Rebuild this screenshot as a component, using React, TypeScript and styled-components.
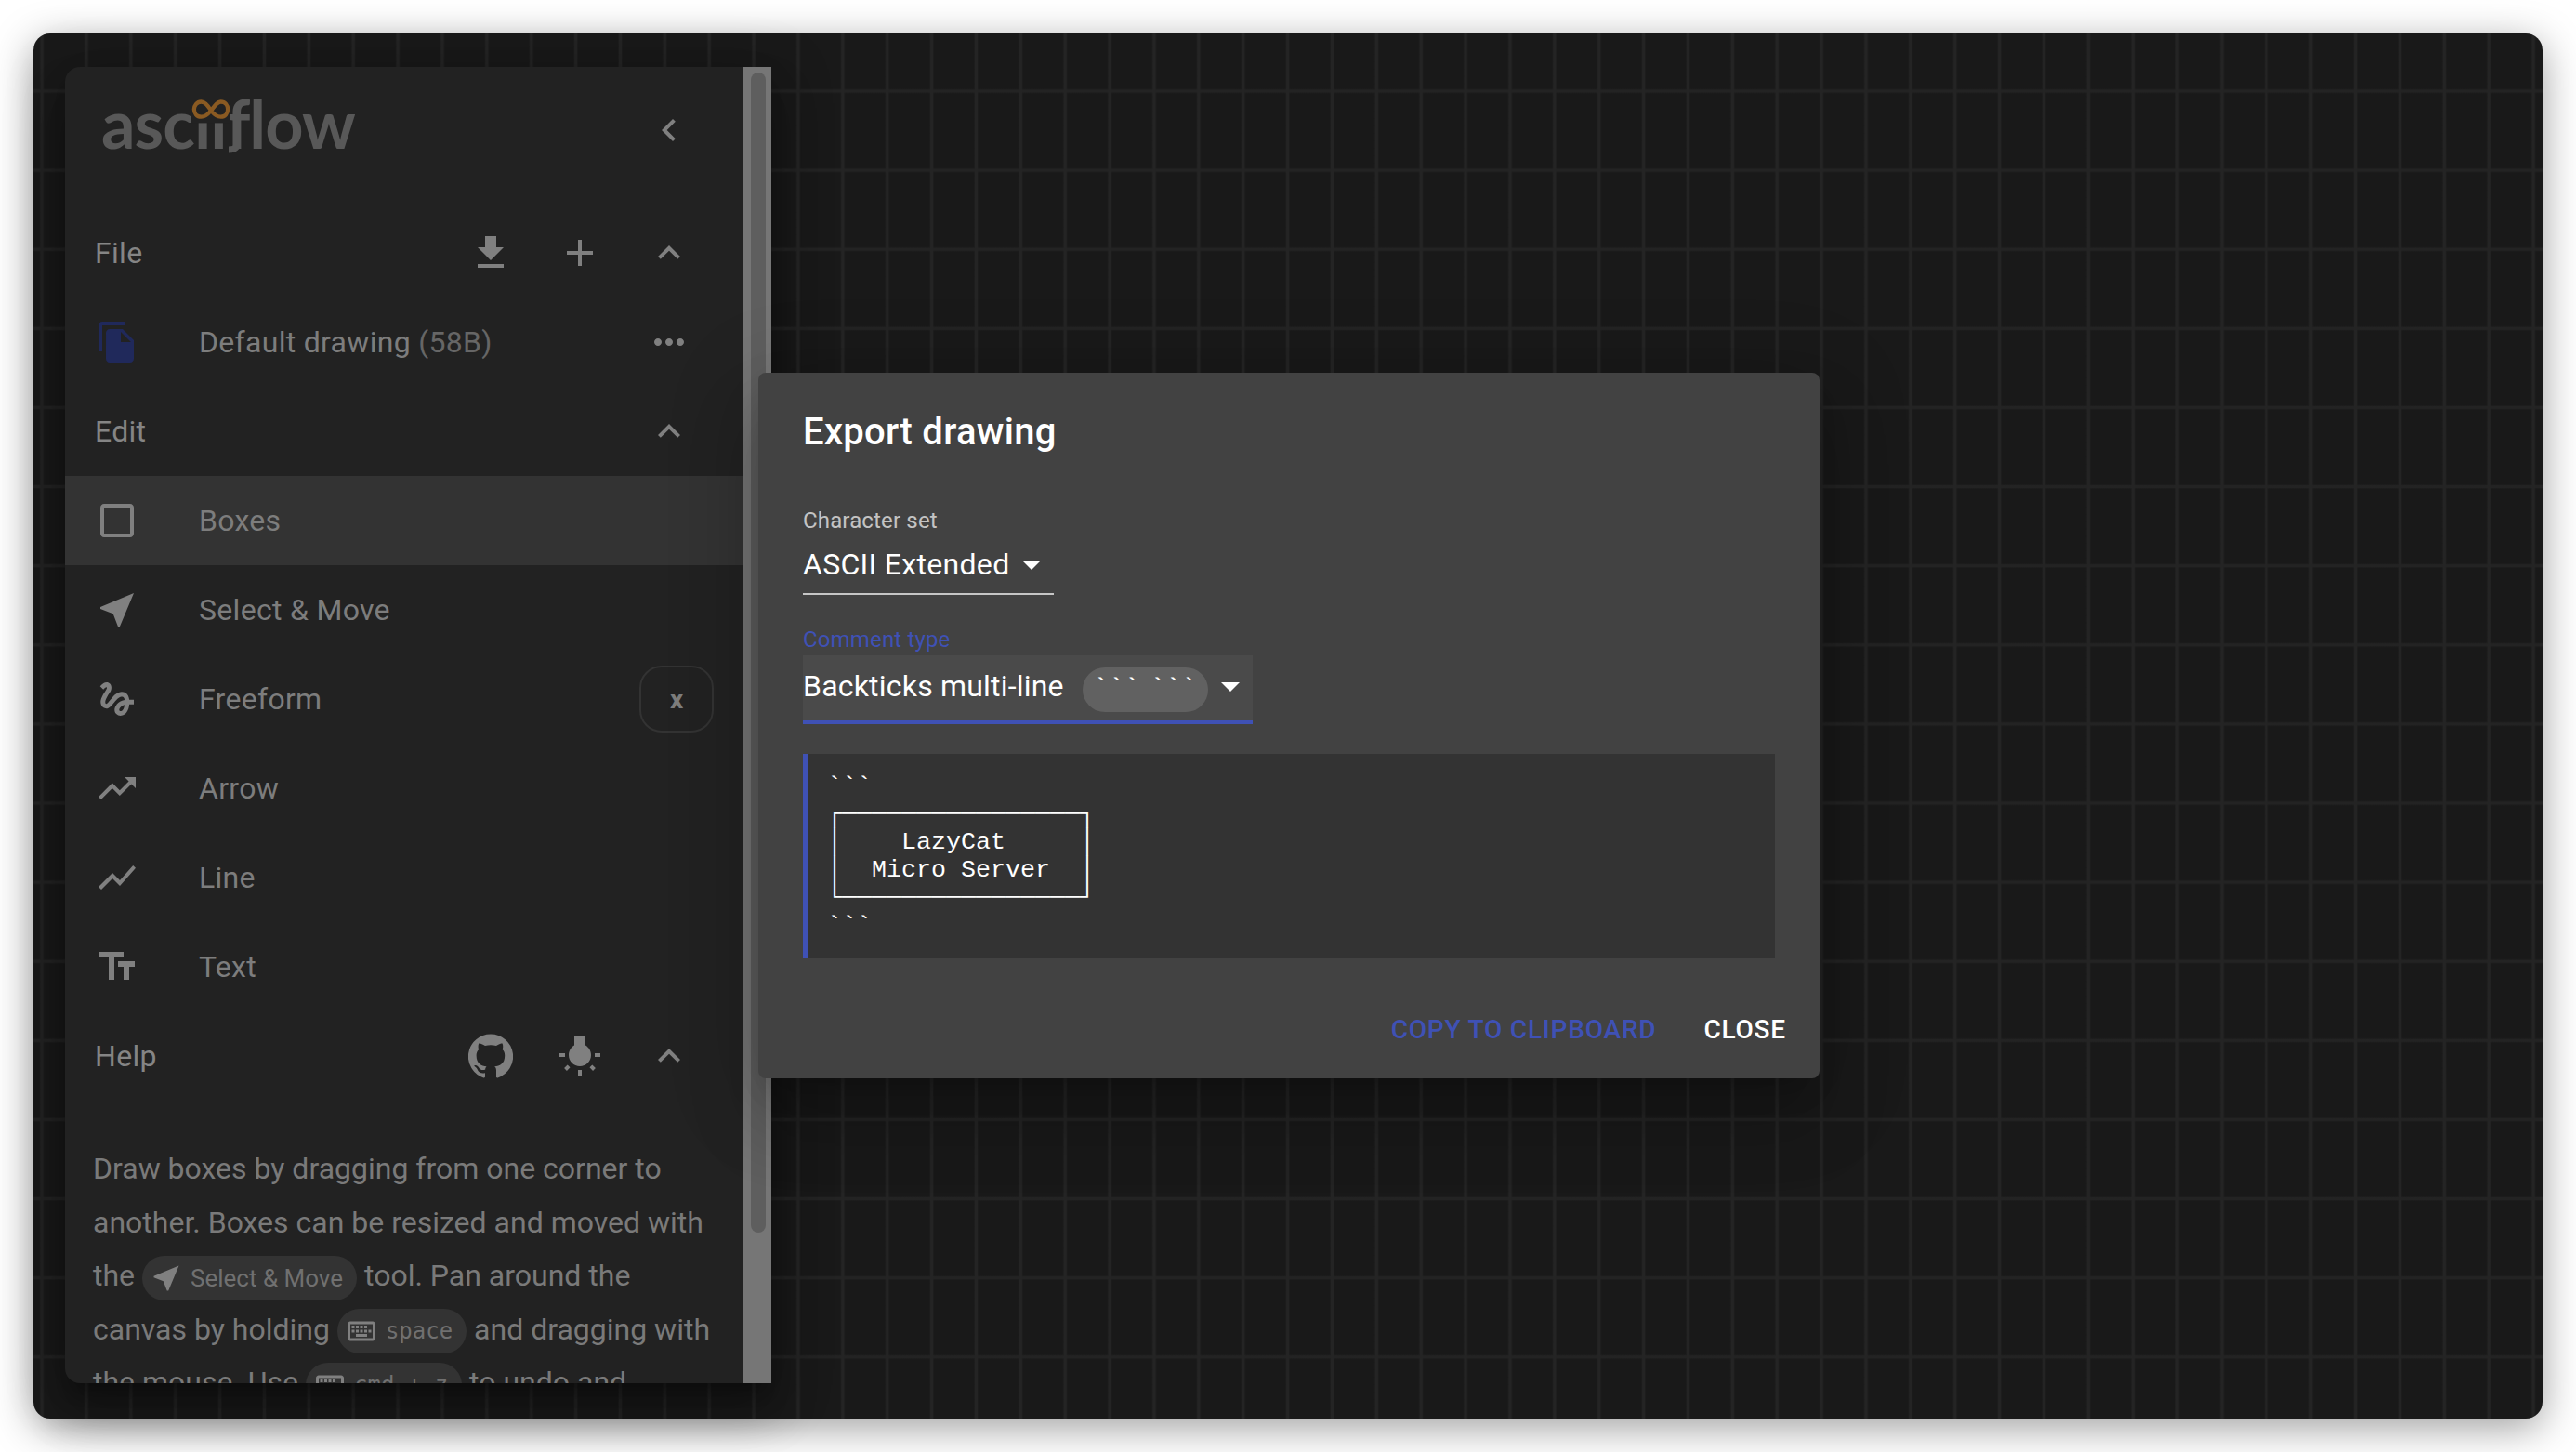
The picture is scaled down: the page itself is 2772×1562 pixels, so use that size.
import styled, { createGlobalStyle } from 'styled-components';

const GlobalStyle = createGlobalStyle`
    html, body {
        margin: 0;
        background: #ffffff;
    }
    * {
        box-sizing: border-box;
    }
`

const ICONS: Record<string, string> = {
    download: "M19 9h-4V3H9v6H5l7 7 7-7zM5 18v2h14v-2H5z",
    add: "M19 13h-6v6h-2v-6H5v-2h6V5h2v6h6v2z",
    less: "M12 8l-6 6 1.41 1.41L12 10.83l4.59 4.58L18 14z",
    back: "M15.41 7.41L14 6l-6 6 6 6 1.41-1.41L10.83 12z",
    file: "M16 1H4c-1.1 0-2 .9-2 2v14h2V3h12V1zm-1 4l6 6v10c0 1.1-.9 2-2 2H7.99C6.89 23 6 22.1 6 21l.01-14c0-1.1.89-2 1.99-2h7zm-1 7h5.5L14 6.5V12z",
    more: "M6 10c-1.1 0-2 .9-2 2s.9 2 2 2 2-.9 2-2-.9-2-2-2zm12 0c-1.1 0-2 .9-2 2s.9 2 2 2 2-.9 2-2-.9-2-2-2zm-6 0c-1.1 0-2 .9-2 2s.9 2 2 2 2-.9 2-2-.9-2-2-2z",
    box: "M19 5v14H5V5h14m0-2H5c-1.1 0-2 .9-2 2v14c0 1.1.9 2 2 2h14c1.1 0 2-.9 2-2V5c0-1.1-.9-2-2-2z",
    near: "M21 3L3 10.53v.98l6.84 2.65L12.48 21h.98L21 3z",
    gesture: "M4.59 6.89c.7-.71 1.4-1.35 1.71-1.22.5.2 0 1.03-.3 1.52-.25.42-2.86 3.89-2.86 6.31 0 1.28.48 2.34 1.34 2.98.75.56 1.74.73 2.64.46 1.07-.31 1.95-1.4 3.06-2.77 1.21-1.49 2.83-3.44 4.08-3.44 1.63 0 1.65 1.01 1.76 1.79-3.78.64-5.38 3.67-5.38 5.37 0 1.7 1.44 3.09 3.21 3.09 1.63 0 4.29-1.33 4.69-6.1H21v-2.5h-2.47c-.15-1.65-1.09-4.2-4.03-4.2-2.25 0-4.18 1.91-4.94 2.84-.58.73-2.06 2.48-2.29 2.72-.25.3-.68.84-1.11.84-.45 0-.72-.83-.36-1.92.35-1.09 1.4-2.86 1.85-3.52.78-1.14 1.3-1.92 1.3-3.28C8.95 3.69 7.31 3 6.44 3 5.12 3 3.97 4 3.72 4.25c-.36.36-.66.66-.88.93l1.75 1.71zm9.29 11.66c-.31 0-.74-.26-.74-.72 0-.6.73-2.2 2.87-2.76-.3 2.69-1.43 3.48-2.13 3.48z",
    trending: "M16 6l2.29 2.29-4.88 4.88-4-4L2 16.59 3.41 18l6-6 4 4 6.3-6.29L22 12V6z",
    chart: "M3.5 18.49l6-6.01 4 4L22 6.92l-1.41-1.41-7.09 7.97-4-4L2 16.99z",
    text: "M2.5 4v3h5v12h3V7h5V4h-13zm19 5h-9v3h3v7h3v-7h3V9z",
    github: "M12 .3a12 12 0 0 0-3.8 23.4c.6.1.8-.3.8-.6v-2c-3.3.7-4-1.6-4-1.6-.6-1.4-1.4-1.8-1.4-1.8-1-.7.1-.7.1-.7 1.2 0 1.9 1.2 1.9 1.2 1 1.8 2.8 1.3 3.5 1 0-.8.4-1.3.7-1.6-2.7-.3-5.5-1.3-5.5-6 0-1.2.5-2.3 1.3-3.1-.2-.4-.6-1.6 0-3.2 0 0 1-.3 3.4 1.2a11.5 11.5 0 0 1 6 0c2.3-1.5 3.3-1.2 3.3-1.2.6 1.6.2 2.8 0 3.2.9.8 1.3 1.9 1.3 3.2 0 4.6-2.8 5.6-5.5 5.9.5.4.9 1 .9 2.2v3.3c0 .3.1.7.8.6A12 12 0 0 0 12 .3",
    bulb: "M3.55 18.54l1.41 1.41 1.79-1.8-1.41-1.41-1.79 1.8zM11 22.45h2V19.5h-2v2.95zM4 10.5H1v2h3v-2zm11-4.19V1.5H9v4.81C7.21 7.35 6 9.28 6 11.5c0 3.31 2.69 6 6 6s6-2.69 6-6c0-2.22-1.21-4.15-3-5.19zm5 4.19v2h3v-2h-3zm-2.76 7.66l1.79 1.8 1.41-1.41-1.8-1.79-1.4 1.4z",
    keyboard: "M20 7v10H4V7h16m0-2H4c-1.1 0-1.99.9-1.99 2L2 17c0 1.1.9 2 2 2h16c1.1 0 2-.9 2-2V7c0-1.1-.9-2-2-2zm-9 3h2v2h-2zm0 3h2v2h-2zM8 8h2v2H8zm0 3h2v2H8zm-3 0h2v2H5zm0-3h2v2H5zm3 6h8v2H8zm6-3h2v2h-2zm0-3h2v2h-2zm3 3h2v2h-2zm0-3h-2V8h2z",
    drop: "M7 10l5 5 5-5z",
};

const Icon = ({ name, size = 48, color = "#808080" }: { name: string; size?: number; color?: string }) => (
    <svg width={size} height={size} viewBox="0 0 24 24" fill={color} style={{ flexShrink: 0, display: "block" }}>
        <path d={ICONS[name]} />
    </svg>
);

const TOOLS = [
    { name: "box", label: "Boxes", active: true },
    { name: "near", label: "Select & Move" },
    { name: "gesture", label: "Freeform", shortcut: "x" },
    { name: "trending", label: "Arrow" },
    { name: "chart", label: "Line" },
    { name: "text", label: "Text" },
];

const PREVIEW = `\`\`\`
┌────────────────┐
│    LazyCat     │
│  Micro Server  │
└────────────────┘
\`\`\``;

const App = () => {
    return (
        <>
            <GlobalStyle />
            <Page>
                <Win>
                    <Drawer>
                        <DrawerBody>
                            <LogoBar>
                                <Logo>
                                    asciiflow
                                    <LogoMark width="42" height="27" viewBox="0 0 44 27">
                                        <rect x="0" y="0" width="44" height="27" fill="#222222" />
                                        <path
                                            d="M22 13 C18 6 15 3 11 3 C6 3 3 7.5 3 11.5 C3 16 6 20 11 20 C15 20 18 18 22 13 C26 8 29 3 33 3 C38 3 41 7 41 11.5 C41 16 38 20 33 20 C29 20 26 18 22 13 Z"
                                            fill="none"
                                            stroke="#8a5a22"
                                            strokeWidth="4.5"
                                        />
                                    </LogoMark>
                                    <LogoHook width="16" height="16" viewBox="0 0 16 16">
                                        <path d="M12 0 V6 C12 10 9 12 3 12" fill="none" stroke="#585858" strokeWidth="7" />
                                    </LogoHook>
                                </Logo>
                                <IconButton><Icon name="back" /></IconButton>
                            </LogoBar>

                            <SectionRow>
                                <SectionTitle>File</SectionTitle>
                                <IconButton><Icon name="download" /></IconButton>
                                <IconButton><Icon name="add" /></IconButton>
                                <IconButton><Icon name="less" /></IconButton>
                            </SectionRow>
                            <ToolRow>
                                <ToolIcon><Icon name="file" color="#20295b" /></ToolIcon>
                                <ToolLabel>Default drawing <Dim>(58B)</Dim></ToolLabel>
                                <IconButton><Icon name="more" /></IconButton>
                            </ToolRow>

                            <SectionRow>
                                <SectionTitle>Edit</SectionTitle>
                                <IconButton><Icon name="less" /></IconButton>
                            </SectionRow>
                            {TOOLS.map((tool) => (
                                <ToolRow key={tool.label} $active={tool.active}>
                                    <ToolIcon><Icon name={tool.name} /></ToolIcon>
                                    <ToolLabel>{tool.label}</ToolLabel>
                                    {tool.shortcut && <KeyCap>{tool.shortcut}</KeyCap>}
                                </ToolRow>
                            ))}

                            <SectionRow>
                                <SectionTitle>Help</SectionTitle>
                                <IconButton><Icon name="github" /></IconButton>
                                <IconButton><Icon name="bulb" /></IconButton>
                                <IconButton><Icon name="less" /></IconButton>
                            </SectionRow>
                            <HelpText>
                                Draw boxes by dragging from one corner to another. Boxes can be resized and moved with the{" "}
                                <HelpChip><Icon name="near" size={36} />Select &amp; Move</HelpChip>{" "}
                                tool. Pan around the canvas by holding{" "}
                                <HelpChip><Icon name="keyboard" size={36} /><KeyLabel>space</KeyLabel></HelpChip>{" "}
                                and dragging with the mouse. Use{" "}
                                <HelpChip><Icon name="keyboard" size={36} /><KeyLabel>cmd + z</KeyLabel></HelpChip>{" "}
                                to undo and
                            </HelpText>
                        </DrawerBody>
                        <ScrollTrack>
                            <ScrollThumb />
                        </ScrollTrack>
                    </Drawer>

                    <Dialog>
                        <DialogTitle>Export drawing</DialogTitle>
                        <FieldLabel $first>Character set</FieldLabel>
                        <PlainSelect>
                            ASCII Extended
                            <Icon name="drop" color="#ffffff" />
                        </PlainSelect>
                        <FieldLabel $focused>Comment type</FieldLabel>
                        <FocusedSelect>
                            Backticks multi-line
                            <TickChip>``` ```</TickChip>
                            <Icon name="drop" color="#ffffff" />
                        </FocusedSelect>
                        <Preview>{PREVIEW}</Preview>
                        <Actions>
                            <ActionButton $primary>Copy to clipboard</ActionButton>
                            <ActionButton>Close</ActionButton>
                        </Actions>
                    </Dialog>
                </Win>
            </Page>
        </>
    )
}

export default App;

const Page = styled.div`
    width: 2772px;
    height: 1562px;
    padding: 36px;
    overflow: hidden;
    background: #ffffff;
    font-family: 'Roboto', 'Liberation Sans', sans-serif;
`

const Win = styled.div`
    position: relative;
    width: 2700px;
    height: 1490px;
    padding: 36px 1906px 38px 34px;
    border-radius: 18px;
    box-shadow: 0 10px 44px rgba(0, 0, 0, 0.38);
    background-color: #191919;
    background-image:
        linear-gradient(to right, transparent 0, #242424 1.5px, #242424 3.5px, transparent 5px),
        linear-gradient(to bottom, transparent 0, #232323 1.5px, #232323 3.5px, transparent 5px);
    background-size: 47.88px 85.12px;
    background-position: 6.6px 59.5px;
`

const Drawer = styled.div`
    display: flex;
    width: 760px;
    height: 1416px;
    overflow: hidden;
    border-radius: 16px 0 0 16px;
    background: #222222;
    box-shadow: 0 16px 20px -10px rgba(0, 0, 0, 0.3), 0 32px 48px 4px rgba(0, 0, 0, 0.2), 0 12px 60px 10px rgba(0, 0, 0, 0.2);
`

const DrawerBody = styled.div`
    width: 730px;
    flex-shrink: 0;
`

const ScrollTrack = styled.div`
    width: 30px;
    flex-shrink: 0;
    padding: 6px 6px 0 8px;
    background: #767676;
`

const ScrollThumb = styled.div`
    height: 1248px;
    border-radius: 8px;
    background: #5e5e5e;
`

const LogoBar = styled.div`
    display: flex;
    justify-content: space-between;
    height: 152px;
    padding: 20px 32px 0 39px;
`

const Logo = styled.div`
    position: relative;
    height: 96px;
    margin-top: -8px;
    font-family: 'Lato', sans-serif;
    font-weight: 700;
    font-size: 72px;
    line-height: 96px;
    letter-spacing: -1px;
    color: #585858;
`

const LogoMark = styled.svg`
    position: absolute;
    left: 97px;
    top: 22px;
`

const LogoHook = styled.svg`
    position: absolute;
    left: 134px;
    top: 65px;
`

const SectionRow = styled.div`
    display: flex;
    align-items: center;
    height: 96px;
    padding: 0 32px;
`

const SectionTitle = styled.span`
    flex: 1;
    font-size: 32px;
    letter-spacing: 0.3px;
    color: #858585;
`

const IconButton = styled.div`
    display: flex;
    align-items: center;
    justify-content: center;
    width: 96px;
    height: 96px;
    flex-shrink: 0;
`

const ToolRow = styled.div<{ $active?: boolean }>`
    display: flex;
    align-items: center;
    height: 96px;
    padding: 0 32px;
    background: ${(props) => (props.$active ? '#333333' : 'transparent')};
`

const ToolIcon = styled.div`
    width: 112px;
    flex-shrink: 0;
`

const ToolLabel = styled.span`
    flex: 1;
    font-size: 32px;
    letter-spacing: 0.3px;
    color: #7d7d7d;
`

const Dim = styled.span`
    color: #666666;
`

const KeyCap = styled.div`
    display: flex;
    align-items: center;
    justify-content: center;
    width: 80px;
    height: 72px;
    border: 2px solid #333333;
    border-radius: 24px;
    font-size: 28px;
    font-weight: 700;
    color: #7d7d7d;
`

const HelpText = styled.div`
    padding: 45px 24px 0 30px;
    font-size: 32px;
    line-height: 57.6px;
    color: #7a7a7a;
`

const HelpChip = styled.span`
    display: inline-flex;
    align-items: center;
    gap: 8px;
    height: 48px;
    padding: 0 15px 0 8px;
    border-radius: 24px;
    vertical-align: middle;
    background: #333333;
    font-size: 26px;
    line-height: 48px;
    color: #707070;
`

const KeyLabel = styled.span`
    font-family: 'DejaVu Sans Mono', monospace;
    font-size: 24px;
`

const Dialog = styled.div`
    position: absolute;
    left: 780px;
    top: 365px;
    width: 1142px;
    height: 759px;
    padding: 32px 48px 0;
    border-radius: 8px;
    background: #424242;
    color: #ffffff;
    box-shadow: 0 22px 30px -14px rgba(0, 0, 0, 0.2), 0 48px 76px 6px rgba(0, 0, 0, 0.14), 0 18px 92px 16px rgba(0, 0, 0, 0.12);
`

const DialogTitle = styled.div`
    font-size: 40px;
    font-weight: 500;
    line-height: 64px;
    letter-spacing: 0.3px;
`

const FieldLabel = styled.div<{ $first?: boolean; $focused?: boolean }>`
    margin-top: ${(props) => (props.$first ? '51px' : '36px')};
    font-size: 24px;
    line-height: 24px;
    letter-spacing: 0.15px;
    color: ${(props) => (props.$focused ? '#3f51b5' : 'rgba(255, 255, 255, 0.7)')};
`

const PlainSelect = styled.div`
    display: flex;
    align-items: center;
    width: fit-content;
    height: 64px;
    margin-top: 4px;
    border-bottom: 2px solid #c6c6c6;
    font-size: 32px;
    letter-spacing: 0.3px;
`

const FocusedSelect = styled.div`
    display: flex;
    align-items: center;
    width: fit-content;
    height: 74px;
    margin-top: 5px;
    padding-bottom: 4px;
    border-bottom: 4px solid #3f51b5;
    background: #4a4a4a;
    font-size: 32px;
    letter-spacing: 0.2px;
`

const TickChip = styled.span`
    height: 48px;
    width: 135px;
    margin-left: 20px;
    margin-top: 7px;
    padding-top: 8px;
    border-radius: 24px;
    background: #616161;
    font-family: 'Liberation Mono', monospace;
    font-size: 28px;
    line-height: 30px;
    letter-spacing: 0;
    word-spacing: -6px;
    white-space: pre;
    text-align: center;
`

const Preview = styled.pre`
    height: 220px;
    margin: 32px 0 0;
    padding: 20px 0 0 20px;
    border-left: 6px solid #3f51b5;
    background: #333333;
    font-family: 'Liberation Mono', monospace;
    font-size: 26.667px;
    line-height: 30px;
    color: #ffffff;
`

const Actions = styled.div`
    display: flex;
    justify-content: flex-end;
    gap: 19px;
    margin: 53px -28px 0 0;
`

const ActionButton = styled.div<{ $primary?: boolean }>`
    height: 48px;
    padding: 0 16px;
    font-size: 28px;
    font-weight: 500;
    line-height: 48px;
    letter-spacing: 0.8px;
    text-transform: uppercase;
    color: ${(props) => (props.$primary ? '#3f51b5' : '#ffffff')};
`
